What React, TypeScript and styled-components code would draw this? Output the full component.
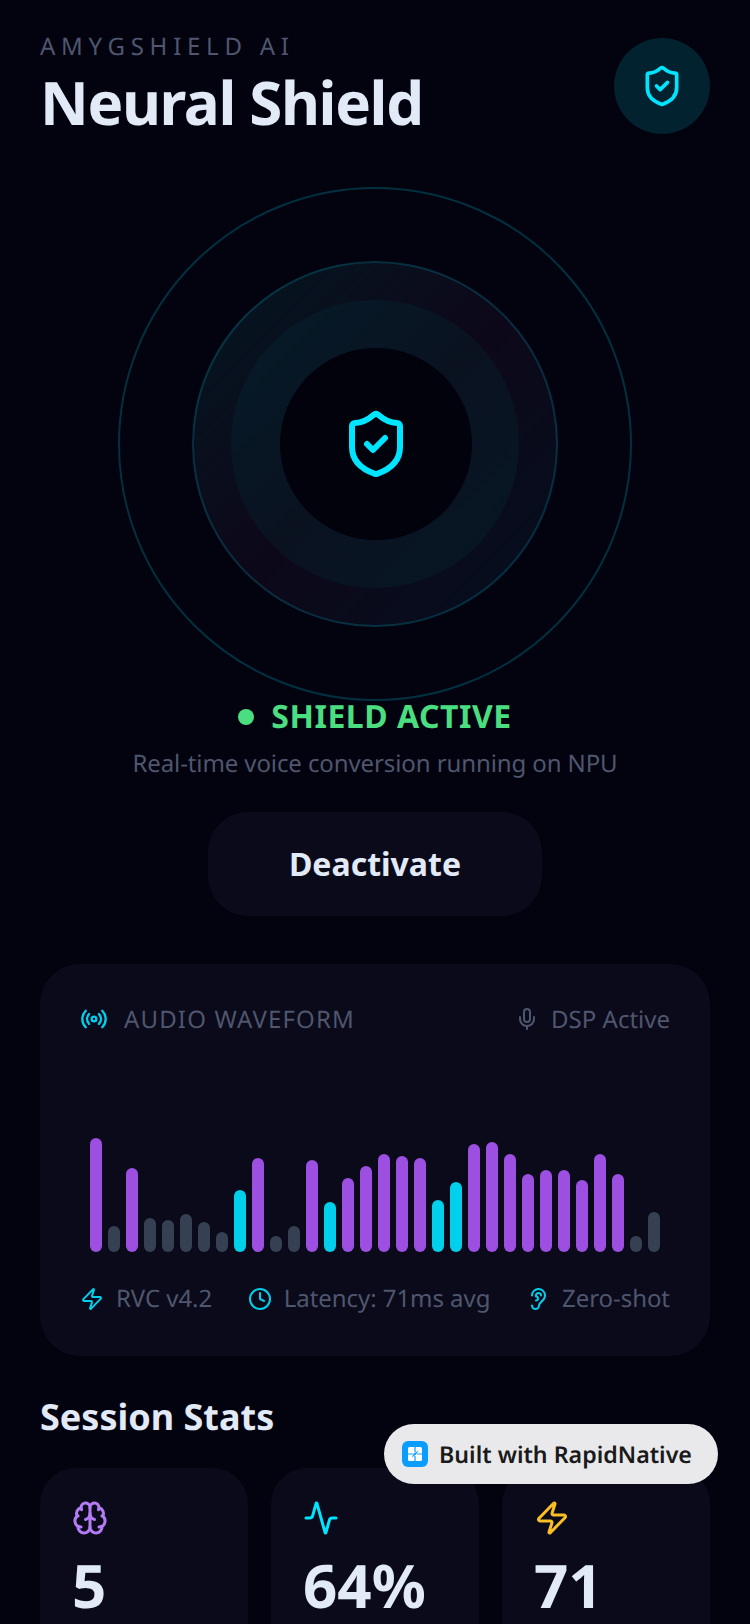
import React from "react";
import styled, { createGlobalStyle } from "styled-components";
import {
  Activity,
  Brain,
  Clock,
  Ear,
  Mic,
  Radio,
  ShieldCheck,
  Zap,
} from "lucide-react";

const GlobalStyle = createGlobalStyle`
  html, body {
    margin: 0;
    padding: 0;
    background: #02030f;
  }
  body {
    font-family: "Noto Sans", "Open Sans", sans-serif;
    text-rendering: geometricPrecision;
    -webkit-font-smoothing: antialiased;
  }
`;

const Screen = styled.div`
  position: relative;
  width: 750px;
  height: 1624px;
  overflow: hidden;
  background: #02030f;
`;

const Header = styled.header`
  display: flex;
  justify-content: space-between;
  align-items: flex-start;
  height: 136px;
  padding: 32px 40px 0;
  box-sizing: border-box;
`;

const Eyebrow = styled.div`
  font-size: 24px;
  line-height: 30px;
  letter-spacing: 5.75px;
  color: #4f566e;
`;

const Title = styled.h1`
  margin: 4px 0 0;
  font-size: 60px;
  line-height: 72px;
  font-weight: 700;
  letter-spacing: -1.35px;
  color: #e2eaf8;
`;

const HeaderIcon = styled.div`
  display: flex;
  align-items: center;
  justify-content: center;
  width: 96px;
  height: 96px;
  margin-top: 6px;
  border-radius: 50%;
  background: #03222f;
  color: #00e5ff;
`;

const Hero = styled.section`
  display: flex;
  justify-content: center;
  margin-top: 51px;
`;

const OuterRing = styled.div`
  display: flex;
  align-items: center;
  justify-content: center;
  width: 514px;
  height: 514px;
  box-sizing: border-box;
  border-radius: 50%;
  border: 2px solid rgba(0, 229, 255, 0.2);
`;

const MiddleRing = styled.div`
  display: flex;
  align-items: center;
  justify-content: center;
  width: 366px;
  height: 366px;
  box-sizing: border-box;
  border-radius: 50%;
  border: 2px solid rgba(0, 229, 255, 0.16);
  background: linear-gradient(135deg, #041722 0%, #0d0819 50%, #040f1e 100%);
`;

const InnerRing = styled.div`
  display: flex;
  align-items: center;
  justify-content: center;
  width: 288px;
  height: 288px;
  border-radius: 50%;
  background: linear-gradient(135deg, #051c29 0%, #0a1220 50%, #061725 100%);
`;

const Core = styled.div`
  display: flex;
  align-items: center;
  justify-content: center;
  width: 192px;
  height: 192px;
  margin-left: 2px;
  border-radius: 50%;
  background: #01020c;
  color: #00e5ff;
`;

const Status = styled.div`
  display: flex;
  align-items: center;
  justify-content: center;
  gap: 17px;
  margin-top: -5px;
`;

const StatusDot = styled.span`
  width: 16px;
  height: 16px;
  border-radius: 50%;
  background: #4ade80;
`;

const StatusText = styled.span`
  font-size: 32px;
  line-height: 42px;
  font-weight: 700;
  letter-spacing: 0.5px;
  color: #4ade80;
`;

const Subtitle = styled.p`
  margin: 8px 0 0;
  text-align: center;
  font-size: 24px;
  line-height: 36px;
  letter-spacing: -0.1px;
  color: #4f566e;
`;

const Deactivate = styled.button`
  display: block;
  width: 334px;
  height: 104px;
  margin: 30px auto 0;
  padding: 0 0 2px;
  border: none;
  border-radius: 40px;
  background: #0a0a1a;
  font-family: inherit;
  font-size: 32px;
  font-weight: 700;
  color: #e2eaf8;
`;

const WaveCard = styled.section`
  box-sizing: border-box;
  height: 392px;
  margin: 48px 40px 0;
  padding: 39px 40px 40px;
  border-radius: 40px;
  background: #0a0a1a;
`;

const WaveHeader = styled.div`
  display: flex;
  justify-content: space-between;
  align-items: center;
  height: 32px;
`;

const HeaderGroup = styled.div<{ $gap: number }>`
  display: flex;
  align-items: center;
  gap: ${({ $gap }) => $gap}px;
  color: #4f566e;
`;

const WaveLabel = styled.span`
  font-size: 24px;
  letter-spacing: 1.15px;
  color: #4f566e;
`;

const DspLabel = styled.span`
  font-size: 24px;
  color: #4f566e;
`;

const Bars = styled.div`
  display: flex;
  align-items: flex-end;
  justify-content: center;
  gap: 6px;
  height: 114px;
  margin-top: 103px;
`;

const Bar = styled.div<{ $tone: Tone; $height: number }>`
  width: 12px;
  height: ${({ $height }) => $height}px;
  border-radius: 6px;
  background: ${({ $tone }) =>
    $tone === "purple" ? "#9d4fe2" : $tone === "cyan" ? "#00d0ec" : "#354152"};
`;

const WaveFooter = styled.div`
  display: flex;
  justify-content: space-between;
  align-items: center;
  margin-top: 29px;
`;

const FooterItem = styled.div`
  display: flex;
  align-items: center;
  gap: 12px;
  color: #00d0ec;
`;

const FooterText = styled.span`
  font-size: 24px;
  line-height: 36px;
  letter-spacing: -0.06px;
  color: #4f566e;
`;

const SectionTitle = styled.h2`
  margin: 37px 40px 0;
  font-size: 36px;
  line-height: 48px;
  font-weight: 700;
  color: #e2eaf8;
`;

const StatsRow = styled.div`
  display: grid;
  grid-template-columns: repeat(3, 1fr);
  gap: 23px;
  margin: 27px 40px 0;
`;

const StatCard = styled.div`
  height: 220px;
  padding: 32px;
  border-radius: 36px;
  background: #0a0a1a;
`;

const StatValue = styled.div`
  margin-top: 8px;
  font-size: 60px;
  line-height: 72px;
  font-weight: 700;
  color: #e2eaf8;
`;

const Badge = styled.div`
  position: absolute;
  left: 384px;
  top: 1424px;
  display: flex;
  align-items: center;
  gap: 11px;
  box-sizing: border-box;
  width: 334px;
  height: 60px;
  padding: 0 18px;
  border-radius: 30px;
  background: #e9e9eb;
`;

const BadgeLogo = styled.svg`
  width: 26px;
  height: 26px;
  flex: none;
`;

const BadgeText = styled.span`
  font-size: 23.2px;
  font-weight: 600;
  white-space: nowrap;
  color: #1a1a1a;
`;

type Tone = "purple" | "cyan" | "grey";
const BARS: [number, Tone][] = [
  [114, "purple"],
  [26, "grey"],
  [84, "purple"],
  [34, "grey"],
  [32, "grey"],
  [38, "grey"],
  [30, "grey"],
  [20, "grey"],
  [62, "cyan"],
  [94, "purple"],
  [16, "grey"],
  [26, "grey"],
  [92, "purple"],
  [50, "cyan"],
  [74, "purple"],
  [86, "purple"],
  [98, "purple"],
  [96, "purple"],
  [94, "purple"],
  [52, "cyan"],
  [70, "cyan"],
  [108, "purple"],
  [110, "purple"],
  [98, "purple"],
  [78, "purple"],
  [82, "purple"],
  [82, "purple"],
  [72, "purple"],
  [98, "purple"],
  [78, "purple"],
  [16, "grey"],
  [40, "grey"],
];

const App: React.FC = () => (
  <Screen>
    <GlobalStyle />
    <Header>
      <div>
        <Eyebrow>AMYGSHIELD AI</Eyebrow>
        <Title>Neural Shield</Title>
      </div>
      <HeaderIcon>
        <ShieldCheck size={44} />
      </HeaderIcon>
    </Header>

    <Hero>
      <OuterRing>
        <MiddleRing>
          <InnerRing>
            <Core>
              <ShieldCheck size={72} />
            </Core>
          </InnerRing>
        </MiddleRing>
      </OuterRing>
    </Hero>

    <Status>
      <StatusDot />
      <StatusText>SHIELD ACTIVE</StatusText>
    </Status>
    <Subtitle>Real-time voice conversion running on NPU</Subtitle>
    <Deactivate>Deactivate</Deactivate>

    <WaveCard>
      <WaveHeader>
        <HeaderGroup $gap={16}>
          <Radio size={28} color="#00d0ec" />
          <WaveLabel>AUDIO WAVEFORM</WaveLabel>
        </HeaderGroup>
        <HeaderGroup $gap={12}>
          <Mic size={24} />
          <DspLabel>DSP Active</DspLabel>
        </HeaderGroup>
      </WaveHeader>
      <Bars>
        {BARS.map(([height, tone], i) => (
          <Bar key={i} $height={height} $tone={tone} />
        ))}
      </Bars>
      <WaveFooter>
        <FooterItem>
          <Zap size={24} />
          <FooterText>RVC v4.2</FooterText>
        </FooterItem>
        <FooterItem>
          <Clock size={24} />
          <FooterText>Latency: 71ms avg</FooterText>
        </FooterItem>
        <FooterItem>
          <Ear size={24} />
          <FooterText>Zero-shot</FooterText>
        </FooterItem>
      </WaveFooter>
    </WaveCard>

    <SectionTitle>Session Stats</SectionTitle>
    <StatsRow>
      <StatCard>
        <Brain size={36} color="#b57bf5" />
        <StatValue>5</StatValue>
      </StatCard>
      <StatCard>
        <Activity size={36} color="#00e5ff" />
        <StatValue>64%</StatValue>
      </StatCard>
      <StatCard>
        <Zap size={36} color="#fbbf24" />
        <StatValue>71</StatValue>
      </StatCard>
    </StatsRow>

    <Badge>
      <BadgeLogo viewBox="0 0 26 26">
        <rect width="26" height="26" rx="6" fill="#0a9dff" />
        <rect x="6" y="6" width="14" height="14" rx="1.5" fill="#fff" />
        <path
          d="M13 6v5M13 15v5M6 13h5M15 13h5"
          stroke="#0a9dff"
          strokeWidth="1.2"
        />
        <path d="M9.5 16.5 12.2 12.2 16.5 9.5 13.8 13.8z" fill="#0a9dff" />
      </BadgeLogo>
      <BadgeText>Built with RapidNative</BadgeText>
    </Badge>
  </Screen>
);

export default App;
